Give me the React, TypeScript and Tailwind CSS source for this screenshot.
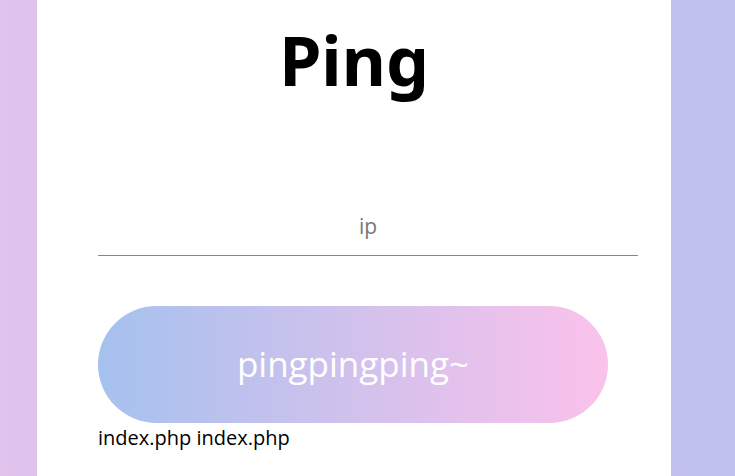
export default function App() {
  return (
    <div className="flex h-[476px] w-[735px] overflow-hidden bg-[linear-gradient(to_right,#e1c3ec,#bfc1ee)]">
      <div className="ml-[37px] h-full w-[634px] bg-white px-[61px]">
        <h1 className="mt-[20px] text-center font-['Noto_Sans',sans-serif] text-[68px] font-bold leading-[80px] text-black">
          Ping
        </h1>
        <input
          type="text"
          placeholder="ip"
          className="mt-[96px] block h-[60px] w-[540px] border-b border-[#888] text-center font-['Open_Sans',sans-serif] text-[21px] text-[#555] outline-none placeholder:text-[#777]"
        />
        <button className="mt-[50px] block h-[117px] w-[510px] rounded-full bg-[linear-gradient(to_right,#a6c1ee,#fbc2eb)] font-['Open_Sans',sans-serif] text-[35px] text-white">
          pingpingping~
        </button>
        <p className="mt-[2px] font-['Open_Sans',sans-serif] text-[20px] leading-[26px] text-black">
          index.php index.php
        </p>
      </div>
    </div>
  );
}
